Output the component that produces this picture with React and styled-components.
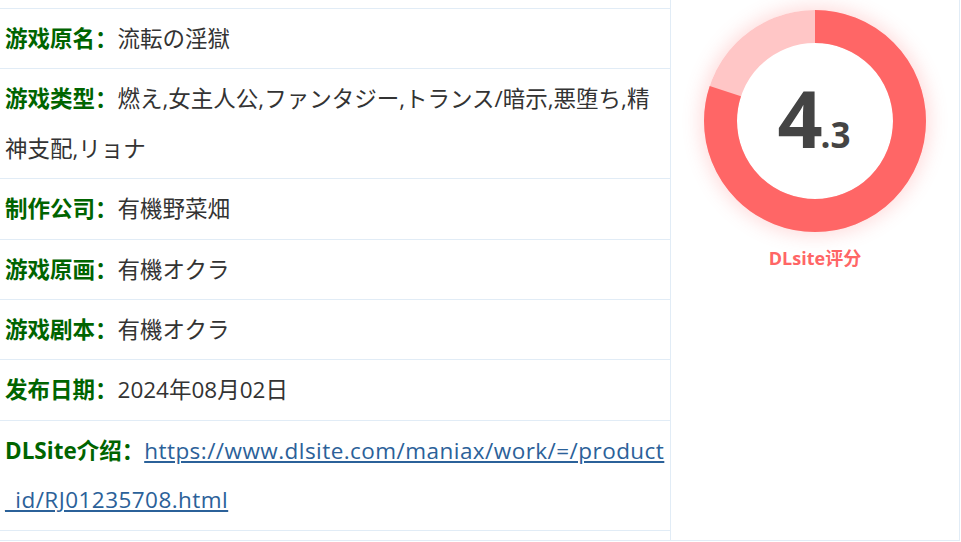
import React from "react";
import styled, { createGlobalStyle } from "styled-components";

const Global = createGlobalStyle`
  html, body { margin: 0; padding: 0; background: #fff; }
  body { font-family: "Open Sans", "Noto Sans CJK SC", sans-serif; }
`;

const Table = styled.div`
  display: grid;
  grid-template-columns: 671px 288px;
  width: 960px;
  border-right: 1px solid #e1ecf6;
  border-bottom: 1px solid #e1ecf6;
  box-sizing: border-box;
`;

const InfoCell = styled.div`
  border-right: 1px solid #e1ecf6;
  padding: 8px 0 9px;
`;

const Row = styled.div`
  border-top: 1px solid #e1ecf6;
  &:last-child { border-bottom: 1px solid #e1ecf6; }
  padding: 4.9px 4px 4.9px 5px;
  font-size: 22.5px;
  line-height: 49.6px;
  color: #333;
  word-break: break-all;
`;

const Label = styled.strong`
  color: #006400;
  font-weight: 700;
`;

const Link = styled.a`
  color: #2b6199;
  text-decoration: underline;
  letter-spacing: 0.45px;
`;

const ScoreCell = styled.div`
  display: flex;
  flex-direction: column;
  align-items: center;
  padding-top: 10px;
`;

const Donut = styled.div`
  position: relative;
  width: 222px;
  height: 222px;
  border-radius: 50%;
  box-shadow: 0 0 18px 4px rgba(255, 102, 102, 0.22);
`;

const Score = styled.div`
  position: absolute;
  inset: 0;
  display: flex;
  align-items: baseline;
  justify-content: center;
  padding-top: 68px;
  padding-right: 2px;
  box-sizing: border-box;
  color: #444;
  font-weight: 700;
  line-height: 1;
`;

const Big = styled.span`
  font-size: 79px;
  letter-spacing: -2px;
`;

const Small = styled.span`
  font-size: 35px;
`;

const Caption = styled.div`
  margin-top: 14px;
  color: #ff6666;
  font-size: 18px;
  font-weight: 700;
  line-height: 24px;
`;

const rows = [
  { label: "游戏原名：", value: "流転の淫獄" },
  { label: "游戏类型：", value: "燃え,女主人公,ファンタジー,トランス/暗示,悪堕ち,精神支配,リョナ" },
  { label: "制作公司：", value: "有機野菜畑" },
  { label: "游戏原画：", value: "有機オクラ" },
  { label: "游戏剧本：", value: "有機オクラ" },
  { label: "发布日期：", value: "2024年08月02日" },
];

const url = "https://www.dlsite.com/maniax/work/=/product_id/RJ01235708.html";

function Ring({ pct }) {
  const r = 94.5;
  const c = 2 * Math.PI * r;
  return (
    <svg width="222" height="222" viewBox="0 0 222 222">
      <circle cx="111" cy="111" r={r} fill="none" stroke="#ffc6c6" strokeWidth="33" />
      <circle
        cx="111"
        cy="111"
        r={r}
        fill="none"
        stroke="#ff6666"
        strokeWidth="33"
        strokeDasharray={`${c * pct} ${c}`}
        transform="rotate(-90 111 111)"
      />
    </svg>
  );
}

export default function App() {
  return (
    <>
      <Global />
      <Table>
        <InfoCell>
          {rows.map((r) => (
            <Row key={r.label}>
              <Label>{r.label}</Label>
              {r.value}
            </Row>
          ))}
          <Row>
            <Label>DLSite介绍：</Label>
            <Link href="#">{url}</Link>
          </Row>
        </InfoCell>
        <ScoreCell>
          <Donut>
            <Ring pct={0.8} />
            <Score>
              <Big>4</Big>
              <Small>.3</Small>
            </Score>
          </Donut>
          <Caption>DLsite评分</Caption>
        </ScoreCell>
      </Table>
    </>
  );
}
